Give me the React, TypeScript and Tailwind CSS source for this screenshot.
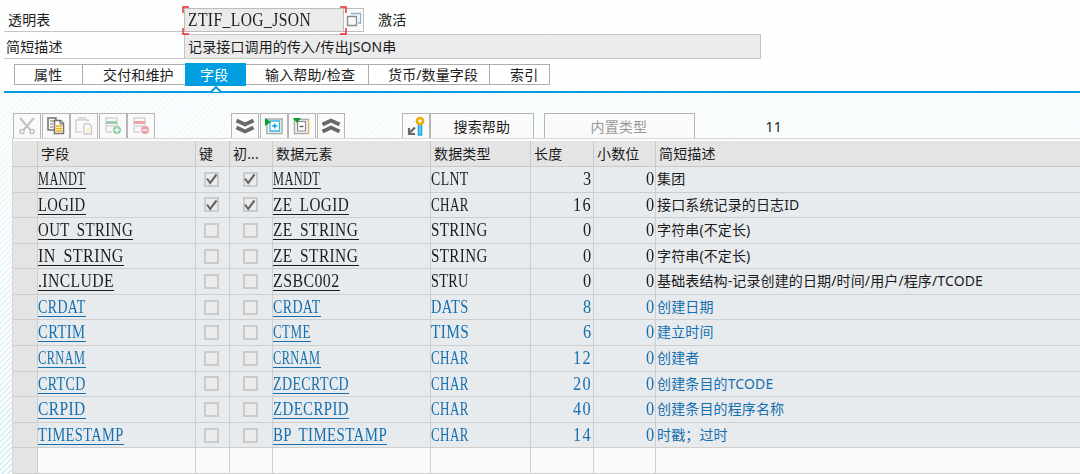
import { useLayoutEffect, useRef, type ReactNode } from "react";

const CELL = 9.5;

/** Fixed-pitch serif text: the string is condensed and spaced to 9.5px per character. */
function Pitch({ text, link = false }: { text: string; link?: boolean }) {
  const ref = useRef<HTMLSpanElement>(null);
  useLayoutEffect(() => {
    const el = ref.current;
    if (!el) return;
    el.style.letterSpacing = "0px";
    const natural = el.offsetWidth;
    const n = text.length;
    const target = n * CELL;
    const scale = Math.min(0.86, (n * 9.1) / natural);
    el.style.letterSpacing = `${(target / scale - natural) / n}px`;
    el.style.transform = `scaleX(${scale})`;
  }, [text]);
  return (
    <span
      className={`inline-block h-[20px] ${link ? "border-b border-current" : ""}`}
      style={{ width: text.length * CELL }}
    >
      <span
        ref={ref}
        className="inline-block origin-left font-['Liberation_Serif',serif] text-[19px] leading-[20px] whitespace-pre [word-spacing:4px]"
      >
        {text}
      </span>
    </span>
  );
}

const GRID =
  "grid grid-cols-[25px_158px_34px_43px_158px_100px_63px_62px_1fr]";

type Row = [string, boolean, string, string, number, string];
const rows: Row[] = [
  ["MANDT", true, "MANDT", "CLNT", 3, "集团"],
  ["LOGID", true, "ZE LOGID", "CHAR", 16, "接口系统记录的日志ID"],
  ["OUT STRING", false, "ZE STRING", "STRING", 0, "字符串(不定长)"],
  ["IN STRING", false, "ZE STRING", "STRING", 0, "字符串(不定长)"],
  [".INCLUDE", false, "ZSBC002", "STRU", 0, "基础表结构-记录创建的日期/时间/用户/程序/TCODE"],
  ["CRDAT", false, "CRDAT", "DATS", 8, "创建日期"],
  ["CRTIM", false, "CTME", "TIMS", 6, "建立时间"],
  ["CRNAM", false, "CRNAM", "CHAR", 12, "创建者"],
  ["CRTCD", false, "ZDECRTCD", "CHAR", 20, "创建条目的TCODE"],
  ["CRPID", false, "ZDECRPID", "CHAR", 40, "创建条目的程序名称"],
  ["TIMESTAMP", false, "BP TIMESTAMP", "CHAR", 14, "时戳；过时"],
];

function Box({ checked }: { checked: boolean }) {
  return (
    <span className="flex size-[15px] items-center justify-center border-2 border-[#cbcbcb] bg-[#ececec]">
      {checked && (
        <svg viewBox="0 0 12 12" className="size-3 shrink-0" fill="none" stroke="#666" strokeWidth="2.1">
          <path d="M1 5.5 4.2 10 10.5 1.5" />
        </svg>
      )}
    </span>
  );
}

function Tool({ children }: { children: ReactNode }) {
  return (
    <div className="flex h-[26px] w-[28px] items-start justify-center border border-b-0 border-[#b5b5b5] bg-[#fafafa] pt-[2px]">
      <svg width="20" height="20" viewBox="0 0 20 20" fill="none">
        {children}
      </svg>
    </div>
  );
}

const headers = ["", "字段", "键", "初...", "数据元素", "数据类型", "长度", "小数位", "简短描述"];

export default function App() {
  return (
    <div className="relative flex h-[474px] w-[1080px] flex-col overflow-hidden bg-[#fdfefe] font-['Noto_Sans','Noto_Sans_CJK_SC',sans-serif] text-[14px] leading-5 tracking-[0.13px] text-[#1c1c1c]">
      <div className="absolute inset-0 bg-[repeating-linear-gradient(135deg,#d9eef6_0px,#d9eef6_1px,#ffffff_2px,#ffffff_3px,#d9eef6_4px)] [mask-image:linear-gradient(20deg,rgba(0,0,0,1),rgba(0,0,0,0.25)_40%,rgba(0,0,0,0.12))]" />
      <div className="relative flex h-full flex-col">
        <header className="h-[91px] bg-white/70 pl-1">
          <div className="flex h-[32px] pt-[8px]">
            <div className="h-6 w-[180px] border-b border-[#c4c4c4] pl-1 leading-[23px]">透明表</div>
            <div className="relative h-6 w-[160px] border border-[#bdbdbd] bg-[#ebebeb] pt-px pl-[3px] leading-[20px]">
              <Pitch text="ZTIF_LOG_JSON" />
              <svg className="absolute -top-[3px] -left-[3px]" width="165" height="29" fill="none" stroke="#e8262b" strokeWidth="1.4">
                <path d="M1 7V1h6M158 1h6v6M1 22v6h6M158 28h6v-6" />
              </svg>
            </div>
            <div className="flex h-6 w-[20px] items-center justify-center border border-l-0 border-[#bdbdbd] bg-[#fafafa]">
              <svg width="16" height="16" fill="none">
                <path d="M5 1.5h9.5v9.500H12" stroke="#8fb0cc" strokeWidth="1.3" />
                <path d="M1.500 4.500h9v9h-9z" stroke="#8a8a8a" strokeWidth="1.3" />
              </svg>
            </div>
            <div className="pl-[14px] leading-[24px]">激活</div>
          </div>
          <div className="mt-[2px] flex h-[25px]">
            <div className="w-[180px] border-b border-[#c4c4c4] pl-[2px] leading-[25px]">简短描述</div>
            <div className="w-[577px] border border-[#c4c4c4] bg-[#ebebeb] pl-[3px] leading-[24px]">
              记录接口调用的传入/传出JSON串
            </div>
          </div>
          <div className="mt-[3px] flex h-[23px] items-center pt-px pl-[10px] leading-[19px]">
            <div className="h-[21px] w-[69px] border border-[#adadad] bg-white pl-[19px]">属性</div>
            <div className="h-[21px] w-[102px] border-y border-[#adadad] bg-white pl-[20px]">交付和维护</div>
            <div className="h-[23px] w-[61px] bg-[#009de0] pl-[15px] leading-[23px] text-white">字段</div>
            <div className="h-[21px] w-[122px] border-y border-[#adadad] bg-white pl-[19px]">输入帮助/检查</div>
            <div className="h-[21px] w-[122px] border border-[#adadad] bg-white pl-[19px]">货币/数量字段</div>
            <div className="h-[21px] w-[60px] border border-l-0 border-[#adadad] bg-white pl-[20px]">索引</div>
          </div>
        </header>
        <div className="relative ml-1 h-[2px] bg-[#009de0]">
          <svg className="absolute -top-[5px] left-[205px]" width="14" height="7">
            <path d="M2 6 7 1l5 5" fill="#fff" stroke="#009de0" strokeWidth="2" />
          </svg>
        </div>
        <div className="mt-[20px] flex h-[25px] pl-[13px]">
          <div className="flex h-[26px] gap-[0.5px]">
            <Tool>
              <path d="M3 2l10.500 12M17 2L6.500 14" stroke="#c2c2c2" strokeWidth="2" />
              <circle cx="5" cy="15.500" r="2.100" stroke="#c2c2c2" strokeWidth="1.500" />
              <circle cx="15" cy="15.500" r="2.100" stroke="#c2c2c2" strokeWidth="1.500" />
            </Tool>
            <Tool>
              <path d="M10 14H2V2h8v2" stroke="#75706b" strokeWidth="1.500" />
              <path d="M4 5h4M4 8h3M4 11h3" stroke="#777" />
              <path d="M8.500 4.500h6l3 3v10h-9z" fill="#fff" stroke="#75706b" strokeWidth="1.500" />
              <path d="M14 4v4h4" stroke="#5f6a74" />
              <path d="M10 10h6M10 12.500h6M10 15h6" stroke="#f0ab00" strokeWidth="1.500" />
            </Tool>
            <Tool>
              <path d="M8 16H2V4h12v2M5 4V2h6v2" stroke="#d2d2d2" strokeWidth="1.500" />
              <path d="M10 8h5l2.500 2.500V18H10z" fill="#fff" stroke="#c9c9c9" strokeWidth="1.400" />
              <path d="M12 12h4M12 14h4M12 16h4" stroke="#f5deb0" />
            </Tool>
            <Tool>
              <path d="M3 16V2h11v11M4 10h9M9 16H3" stroke="#d2d2d2" strokeWidth="1.300" />
              <path d="M3 6.500h11" stroke="#9bcfaf" strokeWidth="3" />
              <circle cx="14" cy="14" r="4" fill="#93cda8" />
              <path d="M14 11.500v5M11.500 14h5" stroke="#fff" strokeWidth="1.300" />
            </Tool>
            <Tool>
              <path d="M3 16V2h11v11M4 10h9M9 16H3" stroke="#d2d2d2" strokeWidth="1.300" />
              <path d="M3 6.500h11" stroke="#eda3a8" strokeWidth="3" />
              <circle cx="14" cy="14" r="4" fill="#eba1a7" />
              <path d="M11.500 14h5" stroke="#fff" strokeWidth="1.300" />
            </Tool>
          </div>
          <div className="ml-[76px] flex h-[26px] gap-[0.5px]">
            <Tool>
              <path d="M1.500 4.500 10 8.500l8.500-4M1.500 11.500 10 15.500l8.500-4" stroke="#686868" strokeWidth="3.6" />
            </Tool>
            <Tool>
              <path d="M3 3h15v14.500H3z" stroke="#aaa" strokeWidth="1.500" />
              <path d="M6 5h9.500v10H6z" fill="#fff" stroke="#36b4e5" strokeWidth="1.300" />
              <path d="M10.750 7.500v5M8.250 10h5" stroke="#009de0" strokeWidth="1.300" />
              <path d="M1 2v8L7 6z" fill="#0b9e2a" />
            </Tool>
            <Tool>
              <path d="M2.500 3.500h14v14h-14z" stroke="#aaa" strokeWidth="1.500" />
              <path d="M5.500 5.500h8v9.500h-8z" fill="#fff" stroke="#888" strokeWidth="1.200" />
              <path d="M7.500 10.500h4" stroke="#555" strokeWidth="1.300" />
              <path d="M16.500 4v14" stroke="#eebb55" />
              <path d="M1 2h8L5 7z" fill="#0b9e2a" />
            </Tool>
            <Tool>
              <path d="M1.500 8.500 10 4.500l8.500 4M1.500 15.500 10 11.500l8.500 4" stroke="#686868" strokeWidth="3.6" />
            </Tool>
          </div>
          <div className="ml-[57px] flex h-[26px]">
            <Tool>
              <path d="M12.500 8v11h3V8" fill="#7fd0f0" stroke="#22a9df" strokeWidth="1.6" />
              <circle cx="14" cy="5" r="3" fill="#fff" stroke="#f0ab00" strokeWidth="2.700" />
              <path d="M9 11.500l-5 5M3 12v6h6" stroke="#686868" strokeWidth="2.200" />
            </Tool>
          </div>
          <div className="h-[26px] w-[104px] border border-b-0 border-[#b5b5b5] bg-[#fafafa] pl-[23px] leading-[25px]">搜索帮助</div>
          <div className="ml-[10px] h-[26px] w-[151px] border border-b-0 border-[#b5b5b5] bg-[#fafafa] pl-[46px] leading-[25px] text-[#999]">内置类型</div>
          <div className="ml-[71px] leading-[27px]">11</div>
        </div>
        <main className="ml-[12px] flex-1 border-t border-l border-[#d6d6d6] bg-white">
          <div className={`${GRID} mt-[2px] h-[26px] border-b border-[#cacaca] bg-[#e4e4e4] leading-[25px]`}>
            {headers.map((h, i) => (
              <div key={i} className="border-r border-[#cacaca] pl-[3px] whitespace-nowrap last:border-r-0">{h}</div>
            ))}
          </div>
          {rows.map(([name, key, elem, type, len, desc], i) => (
            <div
              key={i}
              className={`${GRID} h-[25.58px] border-b border-[#cecece] bg-[#e8ebee] whitespace-nowrap *:border-r *:border-[#cecece] *:last:border-r-0 ${i > 4 ? "text-[#166fae]" : ""}`}
            >
              <div className="bg-[#e4e4e4]" />
              <div className="pt-[2px]"><Pitch text={name} link /></div>
              <div className="flex items-center justify-center pr-[2px]"><Box checked={key} /></div>
              <div className="flex items-center justify-center pr-[2px]"><Box checked={key} /></div>
              <div className="pt-[2px]"><Pitch text={elem} link /></div>
              <div className="pt-[2px]"><Pitch text={type} /></div>
              <div className="pt-[2px] pr-px text-right"><Pitch text={String(len)} /></div>
              <div className="pt-[2px] text-right"><Pitch text="0" /></div>
              <div className="pl-px leading-[24px]">{desc}</div>
            </div>
          ))}
          <div className={`${GRID} h-[25.58px] border-b border-[#cecece] bg-[#fafafa] *:border-r *:border-[#cecece] *:last:border-r-0`}>
            <div className="bg-[#e4e4e4]" />
            {headers.slice(1).map((h) => <div key={h} />)}
          </div>
        </main>
      </div>
    </div>
  );
}
